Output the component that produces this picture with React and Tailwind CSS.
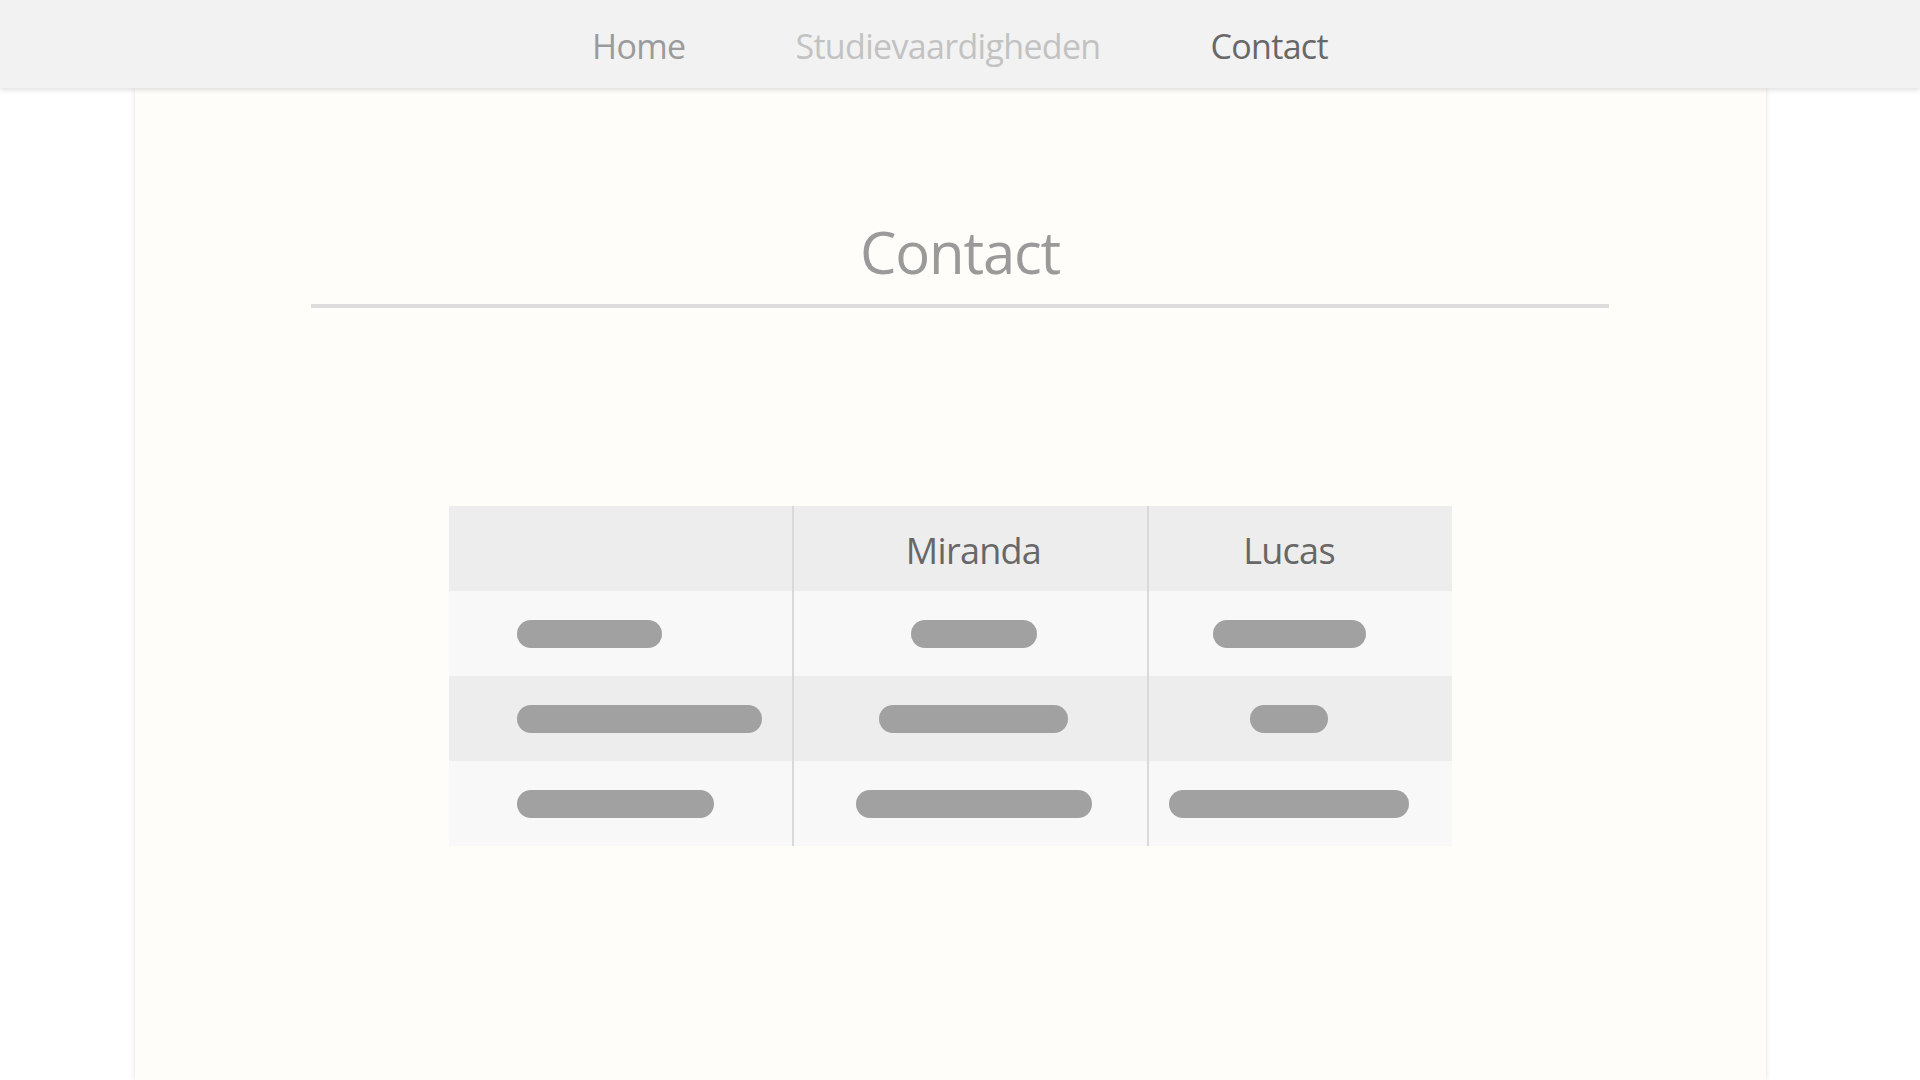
const navItems = [
  { label: "Home", color: "text-[#9b9b9b]" },
  { label: "Studievaardigheden", color: "text-[#c2c2c2]" },
  { label: "Contact", color: "text-[#686868]" },
];

// widths of the placeholder bars, per row: [col1, col2, col3]
const rows = [
  { bg: "bg-[#f8f8f9]", bars: [145, 126, 153] },
  { bg: "bg-[#ededed]", bars: [245, 189, 78] },
  { bg: "bg-[#f8f8f9]", bars: [197, 236, 240] },
];

function Bar({ width }) {
  return <div className="h-[28px] rounded-full bg-[#a1a1a1]" style={{ width }} />;
}

export default function App() {
  return (
    <div className="min-h-screen bg-white font-['Open_Sans',sans-serif]">
      <nav className="relative z-10 flex h-[88px] items-center justify-center gap-[110px] bg-[#f2f2f2] shadow-[0_2px_5px_rgba(0,0,0,0.13)]">
        {navItems.map((item) => (
          <a
            key={item.label}
            href="#"
            className={`text-[34px] tracking-[-0.02em] leading-none pt-[4px] ${item.color}`}
          >
            {item.label}
          </a>
        ))}
      </nav>

      <main className="ml-[135px] w-[1631px] min-h-[992px] bg-[#fffdf9] shadow-[0_0_5px_rgba(0,0,0,0.12)] pt-[135px]">
        <div className="ml-[176px] w-[1298px]">
          <h1 className="text-center text-[58px] leading-none tracking-[-0.02em] text-[#9a9a9a]">
            Contact
          </h1>
          <div className="mt-[23px] h-[4px] bg-[#dddddd]" />
        </div>

        <div className="mx-auto mt-[198px] w-[1003px]">
          <div className="grid grid-cols-[343px_355px_305px]">
            <div className="h-[85px] bg-[#ededed]" />
            <div className="flex h-[85px] items-center justify-center border-l-2 border-[#d9d9d9] bg-[#ededed] pl-[6px] pt-[5px] text-[36px] leading-none tracking-[-0.02em] text-[#676767]">
              Miranda
            </div>
            <div className="flex h-[85px] items-center justify-center border-l-2 border-[#d9d9d9] bg-[#ededed] pr-[23px] pt-[5px] text-[36px] leading-none tracking-[-0.02em] text-[#676767]">
              Lucas
            </div>

            {rows.map((row, i) => (
              <div key={i} className="contents">
                <div className={`flex h-[85px] items-center pl-[68px] ${row.bg}`}>
                  <Bar width={row.bars[0]} />
                </div>
                <div className={`flex h-[85px] items-center justify-center border-l-2 border-[#d9d9d9] pl-[6px] ${row.bg}`}>
                  <Bar width={row.bars[1]} />
                </div>
                <div className={`flex h-[85px] items-center justify-center border-l-2 border-[#d9d9d9] pr-[23px] ${row.bg}`}>
                  <Bar width={row.bars[2]} />
                </div>
              </div>
            ))}
          </div>
        </div>
      </main>
    </div>
  );
}
